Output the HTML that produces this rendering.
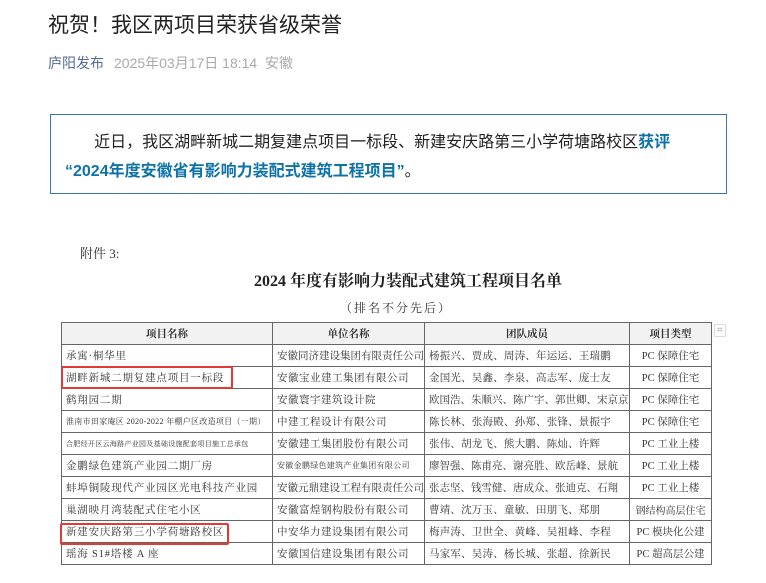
<!DOCTYPE html>
<html><head><meta charset="utf-8"><style>
body{margin:0;width:766px;height:583px;overflow:hidden;background:#fff;font-family:"Liberation Sans","Noto Sans CJK SC",sans-serif;position:relative}
.a{position:absolute;white-space:nowrap}
h1{position:absolute;left:48px;top:9px;margin:0;font-size:21px;font-weight:normal;color:#222}
.meta{left:48px;top:53px;font-size:14px;color:#aaa}
.meta b{font-weight:normal;color:#576b95;margin-right:10px}
.box{position:absolute;left:50px;top:114px;width:675px;height:78px;border:1px solid #3b73c4}
.p{position:absolute;left:12px;font-size:16px;color:#222}
.hl{color:#0d72a8;font-weight:bold}
.doc{font-family:"Liberation Serif","Noto Serif CJK SC",serif;color:#333}
table{position:absolute;left:61px;top:322px;border-collapse:collapse;table-layout:fixed;width:650px;font-family:"Liberation Serif","Noto Serif CJK SC",serif;font-size:10.5px;color:#333}
td,th{border:1px solid #666;height:21px;padding:0 0 0 4px;white-space:nowrap;overflow:hidden;letter-spacing:0.8px}
td:nth-child(2){letter-spacing:0.5px}
td:nth-child(3){letter-spacing:0.2px}
th{background:#f2f2f2;font-weight:bold;text-align:center;letter-spacing:0;padding:0}
td.c{text-align:center;padding:0;letter-spacing:0}
.red{position:absolute;border:2px solid #e53935;border-radius:2px}
</style></head><body>
<h1>祝贺！我区两项目荣获省级荣誉</h1>
<div class="a meta"><b>庐阳发布</b>2025年03月17日 18:14&nbsp;&nbsp;安徽</div>
<div class="box">
<div class="p a" style="top:13px">&nbsp;&nbsp;&nbsp;&nbsp;&nbsp;&nbsp;&nbsp;近日，我区湖畔新城二期复建点项目一标段、新建安庆路第三小学荷塘路校区<span class="hl">获评</span></div>
<div class="p a hl" style="top:42px;left:14px">“2024年度安徽省有影响力装配式建筑工程项目”<span style="color:#222;font-weight:normal">。</span></div>
</div>
<div class="a doc" style="left:80px;top:243px;font-size:13px">附件 3:</div>
<div class="a doc" style="left:254px;top:268px;font-size:16px;font-weight:bold;color:#222">2024 年度有影响力装配式建筑工程项目名单</div>
<div class="a doc" style="left:340px;top:299px;font-size:12px;letter-spacing:2px">（排名不分先后）</div>
<table>
<colgroup><col style="width:211px"><col style="width:152px"><col style="width:205px"><col style="width:82px"></colgroup>
<tr><th>项目名称</th><th>单位名称</th><th>团队成员</th><th>项目类型</th></tr>
<tr><td>承寓·桐华里</td><td style="letter-spacing:0">安徽同济建设集团有限责任公司</td><td>杨振兴、贾成、周涛、年运运、王瑞鹏</td><td class="c">PC 保障住宅</td></tr>
<tr><td>湖畔新城二期复建点项目一标段</td><td>安徽宝业建工集团有限公司</td><td>金国光、吴鑫、李泉、高志军、庞士友</td><td class="c">PC 保障住宅</td></tr>
<tr><td>鹤翔园二期</td><td>安徽寰宇建筑设计院</td><td style="letter-spacing:0">欧国浩、朱顺兴、陈广宇、郭世卿、宋京京</td><td class="c">PC 保障住宅</td></tr>
<tr><td style="font-size:8px;letter-spacing:0.3px">淮南市田家庵区 2020-2022 年棚户区改造项目（一期）</td><td>中建工程设计有限公司</td><td>陈长林、张海殿、孙郑、张锋、景振宇</td><td class="c">PC 保障住宅</td></tr>
<tr><td style="font-size:7px;letter-spacing:0.3px">合肥经开区云海路产业园及基础设施配套项目施工总承包</td><td>安徽建工集团股份有限公司</td><td>张伟、胡龙飞、熊大鹏、陈灿、许辉</td><td class="c">PC 工业上楼</td></tr>
<tr><td>金鹏绿色建筑产业园二期厂房</td><td style="font-size:8px;letter-spacing:0.3px">安徽金鹏绿色建筑产业集团有限公司</td><td style="letter-spacing:0">廖智强、陈甫亮、谢亮胜、欧岳峰、景航</td><td class="c">PC 工业上楼</td></tr>
<tr><td>蚌埠铜陵现代产业园区光电科技产业园</td><td style="letter-spacing:0">安徽元鼎建设工程有限责任公司</td><td style="letter-spacing:0">张志坚、钱雪健、唐成众、张迪克、石翔</td><td class="c">PC 工业上楼</td></tr>
<tr><td>巢湖映月湾装配式住宅小区</td><td>安徽富煌钢构股份有限公司</td><td>曹靖、沈万玉、童敏、田朋飞、郑朋</td><td class="c" style="font-size:10px">钢结构高层住宅</td></tr>
<tr><td>新建安庆路第三小学荷塘路校区</td><td>中安华力建设集团有限公司</td><td>梅声涛、卫世全、黄峰、吴祖峰、李程</td><td class="c">PC 模块化公建</td></tr>
<tr><td>瑶海 S1#塔楼 A 座</td><td>安徽国信建设集团有限公司</td><td>马家军、吴涛、杨长城、张超、徐新民</td><td class="c">PC 超高层公建</td></tr>
</table>
<div class="red" style="left:61px;top:366px;width:168px;height:19px"></div>
<div class="red" style="left:60px;top:523px;width:165px;height:18px"></div>
<div class="a" style="left:714px;top:324px;font-size:10px;color:#aaa;border:1px solid #ddd;padding:0 2px">⌗</div>
</body></html>
